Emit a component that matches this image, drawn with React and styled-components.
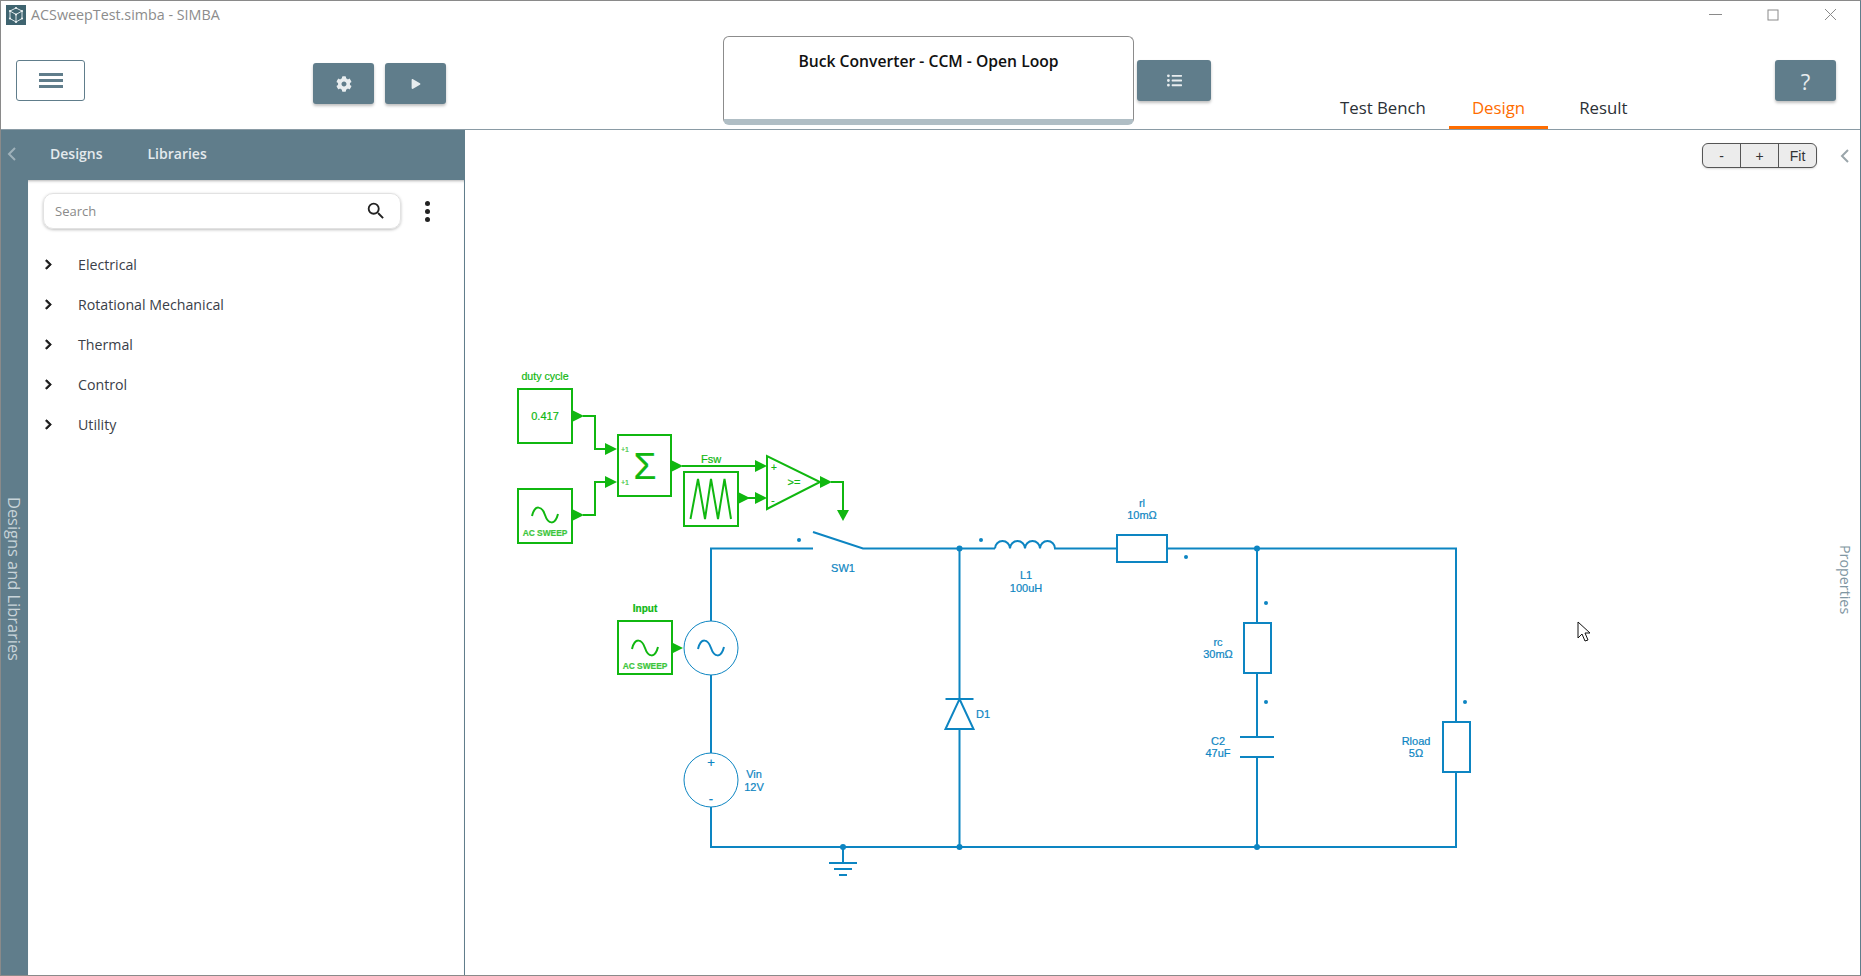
import React from "react";
import styled, { createGlobalStyle } from "styled-components";
import { FaCog, FaPlay, FaListUl, FaChevronRight } from "react-icons/fa";
import { MdSearch } from "react-icons/md";

const SLATE = "#607d8b";
const BLUE = "#0d85c2";
const GREEN = "#10b710";
const LIGHT_GREEN = "#3cc63c";

const GlobalStyle = createGlobalStyle`
  html, body {
    margin: 0;
    padding: 0;
    height: 100%;
    background: #fff;
    overflow: hidden;
  }
  #root {
    height: 100%;
  }
`;

const Window = styled.div`
  width: 1861px;
  height: 976px;
  box-sizing: border-box;
  border: 1px solid #8a8a8a;
  border-right-color: #607d8b;
  display: flex;
  flex-direction: column;
  font-family: "Open Sans", "Noto Sans", sans-serif;
  background: #fff;
  overflow: hidden;
`;

const TopArea = styled.div`
  height: 128px;
  flex: none;
  display: flex;
  flex-direction: column;
  border-bottom: 1px solid #8a9ba5;
`;

const TitleBar = styled.div`
  height: 27px;
  flex: none;
  display: flex;
  align-items: center;
  padding-left: 5px;
  gap: 5px;
`;

const AppTitle = styled.span`
  font-size: 14.3px;
  color: #8c8c8c;
  flex: 1;
`;

const WindowControls = styled.div`
  display: flex;
  align-items: center;
  gap: 45px;
  padding-right: 23px;
  color: #8a8a8a;
`;

const Toolbar = styled.div`
  flex: 1;
  display: flex;
  align-items: flex-start;
  position: relative;
`;

const MenuButton = styled.button`
  width: 69px;
  height: 41px;
  margin: 32px 0 0 15px;
  background: #fff;
  border: 1px solid ${SLATE};
  border-radius: 3px;
  display: flex;
  flex-direction: column;
  align-items: center;
  justify-content: center;
  gap: 3px;
  padding: 0;
  span {
    display: block;
    width: 24px;
    height: 3px;
    background: ${SLATE};
  }
`;

const SlateButton = styled.button`
  width: ${(p) => p.$w || 61}px;
  height: 41px;
  margin: ${(p) => p.$margin};
  flex: none;
  background: ${SLATE};
  border: none;
  border-radius: 3px;
  box-shadow: 0 2px 3px rgba(0, 0, 0, 0.25);
  color: #e8edef;
  display: flex;
  align-items: center;
  justify-content: center;
  padding: 0;
  font-family: inherit;
  font-size: 22px;
`;

const TitleBox = styled.div`
  width: 411px;
  height: 89px;
  margin: 8px 0 0 277px;
  flex: none;
  box-sizing: border-box;
  border: 1px solid #8c8c8c;
  border-bottom: 6px solid #b0bec5;
  border-radius: 6px;
  text-align: center;
  padding-top: 13px;
  font-size: 15.7px;
  font-weight: 600;
  color: #111;
`;

const Tabs = styled.div`
  display: flex;
  align-self: flex-end;
  margin-left: 106px;
`;

const Tab = styled.div`
  height: 35px;
  box-sizing: border-box;
  padding: 0 23px 0 ${(p) => p.$left || 23}px;
  font-size: 16.8px;
  line-height: 28px;
  color: ${(p) => (p.$active ? "#ff6d00" : "#2b3036")};
  font-weight: 500;
  border-bottom: 3px solid ${(p) => (p.$active ? "#ff6d00" : "transparent")};
`;

const Body = styled.div`
  flex: 1;
  display: flex;
  min-height: 0;
`;

const Sidebar = styled.aside`
  width: 464px;
  box-sizing: border-box;
  flex: none;
  display: flex;
  flex-direction: column;
  border-right: 1px solid #607d8b;
  background: ${SLATE};
`;

const SideHeader = styled.div`
  height: 50px;
  flex: none;
  box-sizing: border-box;
  padding: 0 0 3px 6px;
  display: flex;
  align-items: center;
  color: #e4eaed;
  font-size: 14px;
  font-weight: 600;
`;

const SideTab = styled.span`
  margin-left: ${(p) => p.$ml}px;
`;

const SideBody = styled.div`
  flex: 1;
  display: flex;
  min-height: 0;
`;

const Strip = styled.div`
  width: 27px;
  flex: none;
  display: flex;
  justify-content: center;
  padding-top: 317px;
  box-sizing: border-box;
`;

const VerticalLabel = styled.div`
  writing-mode: vertical-rl;
  font-size: ${(p) => p.$size || 16.4}px;
  color: ${(p) => p.$color || "#c8d4d9"};
  white-space: nowrap;
`;

const Library = styled.div`
  flex: 1;
  background: #fff;
  box-shadow: inset 0 3px 3px -2px rgba(0, 0, 0, 0.3);
  padding: 13px 0 0 15px;
`;

const SearchRow = styled.div`
  display: flex;
  align-items: center;
  gap: 24px;
  margin-bottom: 15px;
`;

const SearchBox = styled.div`
  width: 358px;
  height: 36px;
  box-sizing: border-box;
  border: 1px solid #e2e2e2;
  border-radius: 10px;
  box-shadow: 0 1px 3px rgba(0, 0, 0, 0.25);
  display: flex;
  align-items: center;
  justify-content: space-between;
  padding: 0 13px 0 11px;
  font-size: 13px;
  color: #8a8a8a;
`;

const Dots = styled.div`
  display: flex;
  flex-direction: column;
  gap: 3px;
  span {
    width: 5px;
    height: 5px;
    border-radius: 50%;
    background: #222;
  }
`;

const TreeRow = styled.div`
  height: 40px;
  display: flex;
  align-items: center;
  font-size: 14.2px;
  color: #3a4048;
  svg {
    margin: 0 24px 0 0;
    width: 11px;
    height: 11px;
    color: #1c1c1c;
    stroke: currentColor;
    stroke-width: 36;
  }
`;

const Canvas = styled.main`
  flex: 1;
  position: relative;
  min-width: 0;
`;

const CircuitSvg = styled.svg`
  display: block;
  width: 100%;
  height: 100%;
  font-family: "Liberation Sans", Arial, sans-serif;
`;

const ZoomGroup = styled.div`
  position: absolute;
  top: 13px;
  right: 43px;
  height: 25px;
  display: flex;
  box-sizing: border-box;
  border: 1px solid #555;
  border-radius: 6px;
  overflow: hidden;
  background: #ececec;
  box-shadow: 0 1px 2px rgba(0, 0, 0, 0.15);
`;

const ZoomButton = styled.div`
  width: ${(p) => p.$w}px;
  display: flex;
  align-items: center;
  justify-content: center;
  font-family: "Liberation Sans", Arial, sans-serif;
  font-size: 14px;
  color: #333;
  & + & {
    border-left: 1px solid #555;
  }
`;

const CollapseIcon = styled.svg`
  position: absolute;
  top: ${(p) => p.$top}px;
  left: ${(p) => p.$left}px;
`;

const PropertiesTab = styled.div`
  position: absolute;
  right: 5px;
  top: 415px;
`;

const MenuBars = () => (
  <MenuButton aria-label="menu">
    <span />
    <span />
    <span />
  </MenuButton>
);

const AppIcon = () => (
  <svg width="20" height="20" viewBox="0 0 20 20">
    <rect width="20" height="20" fill="#3f6470" />
    <path
      d="M10 3 L16 6 V13.5 L10 17 L4 13.5 V6 Z M4 6 L10 9.5 L16 6 M10 9.5 V17"
      fill="none"
      stroke="#dfe7ea"
      strokeWidth="1"
    />
    {[[10, 3], [16, 6], [16, 13.5], [10, 17], [4, 13.5], [4, 6], [10, 9.5]].map(([x, y]) => (
      <circle key={`${x}-${y}`} cx={x} cy={y} r="1.1" fill="#eef3f4" />
    ))}
  </svg>
);

const Chevron = ({ color, top, left }) => (
  <CollapseIcon $top={top} $left={left} width="10" height="14" viewBox="0 0 10 14">
    <path d="M8 1 L2 7 L8 13" fill="none" stroke={color} strokeWidth="2" />
  </CollapseIcon>
);

const Label = ({ x, y, children, color = BLUE, size = 11, weight, anchor = "middle" }) => (
  <text
    x={x}
    y={y}
    fill={color}
    stroke={color}
    strokeWidth="0.2"
    fontSize={size}
    fontWeight={weight}
    textAnchor={anchor}
    dominantBaseline="central"
  >
    {children}
  </text>
);

const Sine = ({ x, y, color }) => (
  <path
    d={`M${x - 13} ${y + 1} C${x - 10} ${y - 11} ${x - 3} ${y - 9} ${x} ${y} S${x + 10} ${y + 11} ${x + 13} ${y - 1}`}
    fill="none"
    stroke={color}
    strokeWidth="2"
  />
);

const Arrow = ({ x, y }) => (
  <polygon points={`${x},${y - 6} ${x + 12},${y} ${x},${y + 6}`} fill={GREEN} />
);

const ControlBlock = ({ x, y, w = 54, h = 54 }) => (
  <rect x={x} y={y} width={w} height={h} fill="#fff" stroke={GREEN} strokeWidth="2" />
);

const Wire = ({ d, color = BLUE, width = 2 }) => (
  <path d={d} fill="none" stroke={color} strokeWidth={width} />
);

const Dot = ({ x, y, r = 2 }) => <circle cx={x} cy={y} r={r} fill={BLUE} />;

const Resistor = ({ x, y, w, h }) => (
  <rect x={x} y={y} width={w} height={h} fill="#fff" stroke={BLUE} strokeWidth="2" />
);

const Circuit = () => (
  <CircuitSvg viewBox="465 130 1395 845" preserveAspectRatio="xMinYMin slice">
    {/* control side */}
    <Label x={545} y={376} color={GREEN} size={10.6}>duty cycle</Label>
    <ControlBlock x={518} y={389} />
    <Label x={545} y={416} color={GREEN} size={11}>0.417</Label>
    <Wire d="M583 416 H595 V449 H605" color={GREEN} />
    <Arrow x={572} y={416} />
    <Arrow x={605} y={449} />

    <ControlBlock x={518} y={489} />
    <Sine x={545} y={515} color={GREEN} />
    <Label x={545} y={533} color={LIGHT_GREEN} size={8.4} weight="bold">AC SWEEP</Label>
    <Wire d="M583 515 H595 V482 H605" color={GREEN} />
    <Arrow x={572} y={515} />
    <Arrow x={605} y={482} />

    <ControlBlock x={618} y={435} w={53} h={61} />
    <Label x={621} y={449} color={LIGHT_GREEN} size={7} anchor="start">+1</Label>
    <Label x={621} y={482} color={LIGHT_GREEN} size={7} anchor="start">+1</Label>
    <Label x={645} y={466} color={GREEN} size={37}>Σ</Label>
    <Arrow x={671} y={466} />
    <Wire d="M682 466 H755" color={GREEN} />
    <Arrow x={755} y={466} />
    <Label x={711} y={459} color={GREEN} size={11}>Fsw</Label>

    <ControlBlock x={684} y={472} />
    <Wire d="M690.5 519 L698 479 L705 519 L711 479 L718 519 L724.5 479 L731 519" color={GREEN} />
    <Arrow x={738} y={498} />
    <Wire d="M748 498 H755" color={GREEN} />
    <Arrow x={755} y={498} />

    <polygon points="767,456 767,509 820,482" fill="#fff" stroke={GREEN} strokeWidth="2" />
    <Label x={774} y={467} color={GREEN} size={10}>+</Label>
    <Label x={773} y={500} color={GREEN} size={10}>-</Label>
    <Label x={794} y={482} color={GREEN} size={11}>&gt;=</Label>
    <Arrow x={820} y={482} />
    <Wire d="M831 482 H843 V510" color={GREEN} />
    <polygon points="837,510 849,510 843,521" fill={GREEN} />

    {/* power side */}
    <Wire d="M711 621 V548.5 H813" />
    <Wire d="M813 532 L863 548.5 H995" />
    <Dot x={799} y={540} />
    <Label x={843} y={568}>SW1</Label>

    <Label x={645} y={608} color={GREEN} size={10} weight="bold">Input</Label>
    <ControlBlock x={618} y={621} h={53} />
    <Sine x={645} y={648} color={GREEN} />
    <Label x={645} y={666} color={LIGHT_GREEN} size={8.4} weight="bold">AC SWEEP</Label>
    <Arrow x={671} y={648} />
    <circle cx={711} cy={648} r={27} fill="#fff" stroke={BLUE} strokeWidth="1" />
    <Sine x={711} y={648} color={BLUE} />
    <Wire d="M711 675 V753" />
    <circle cx={711} cy={780} r={27} fill="#fff" stroke={BLUE} strokeWidth="1" />
    <Label x={711} y={762} size={13}>+</Label>
    <Label x={711} y={798} size={13}>-</Label>
    <Label x={754} y={774}>Vin</Label>
    <Label x={754} y={787}>12V</Label>
    <Wire d="M711 807 V847 H1456 V772" />

    <Wire d="M843 847 V863" />
    <Wire d="M829 863 H857 M834 869 H852 M839 875 H847" />
    <Dot x={843} y={847} r={3} />

    <Wire d="M959.5 548 V699 M959.5 729 V847" />
    <Wire d="M945.5 699 H973.5" />
    <polygon points="959.5,699 973.5,729 945.5,729" fill="#fff" stroke={BLUE} strokeWidth="2" />
    <Label x={983} y={714}>D1</Label>
    <Dot x={959.5} y={548.5} r={3} />
    <Dot x={959.5} y={847} r={3} />
    <Dot x={981} y={540} />

    <Wire d="M995 548.5 a7.5 7.5 0 0 1 15 0 a7.5 7.5 0 0 1 15 0 a7.5 7.5 0 0 1 15 0 a7.5 7.5 0 0 1 15 0 H1117" />
    <Label x={1026} y={575}>L1</Label>
    <Label x={1026} y={588}>100uH</Label>
    <Resistor x={1117} y={535} w={50} h={27} />
    <Label x={1142} y={503}>rl</Label>
    <Label x={1142} y={515}>10mΩ</Label>
    <Wire d="M1167 548.5 H1456 V722" />
    <Dot x={1186} y={557} />

    <Dot x={1257} y={548.5} r={3} />
    <Dot x={1257} y={847} r={3} />
    <Wire d="M1257 548 V623 M1257 673 V737 M1257 757 V847" />
    <Resistor x={1244} y={623} w={27} h={50} />
    <Dot x={1266} y={603} />
    <Dot x={1266} y={702} />
    <Label x={1218} y={642}>rc</Label>
    <Label x={1218} y={654}>30mΩ</Label>
    <Wire d="M1240 737 H1274 M1240 757 H1274" />
    <Label x={1218} y={741}>C2</Label>
    <Label x={1218} y={753}>47uF</Label>

    <Resistor x={1443} y={722} w={27} h={50} />
    <Dot x={1465} y={702} />
    <Label x={1416} y={741}>Rload</Label>
    <Label x={1416} y={753}>5Ω</Label>

    {/* mouse pointer */}
    <path
      d="M1578 622 V638 L1582 634 L1585 641 L1588 640 L1585 633 L1590 633 Z"
      fill="#fff"
      stroke="#111"
      strokeWidth="1"
    />
  </CircuitSvg>
);

export default function App() {
  return (
    <Window>
      <GlobalStyle />
      <TopArea>
        <TitleBar>
          <AppIcon />
          <AppTitle>ACSweepTest.simba - SIMBA</AppTitle>
          <WindowControls>
            <svg width="13" height="13" viewBox="0 0 13 13">
              <path d="M0 6.5 H13" stroke="currentColor" />
            </svg>
            <svg width="12" height="12" viewBox="0 0 12 12">
              <rect x="1" y="1" width="10" height="10" fill="none" stroke="currentColor" />
            </svg>
            <svg width="13" height="13" viewBox="0 0 13 13">
              <path d="M1 1 L12 12 M12 1 L1 12" stroke="currentColor" />
            </svg>
          </WindowControls>
        </TitleBar>
        <Toolbar>
          <MenuBars />
          <SlateButton $margin="35px 0 0 228px">
            <FaCog size={16} />
          </SlateButton>
          <SlateButton $margin="35px 0 0 11px">
            <FaPlay size={10} />
          </SlateButton>
          <TitleBox>Buck Converter - CCM - Open Loop</TitleBox>
          <SlateButton $w={74} $margin="32px 0 0 3px">
            <FaListUl size={15} />
          </SlateButton>
          <Tabs>
            <Tab>Test Bench</Tab>
            <Tab $active>Design</Tab>
            <Tab $left={31}>Result</Tab>
          </Tabs>
          <SlateButton $margin="32px 24px 0 auto">?</SlateButton>
        </Toolbar>
      </TopArea>
      <Body>
        <Sidebar>
          <SideHeader>
            <svg width="10" height="14" viewBox="0 0 10 14">
              <path d="M8 1 L2 7 L8 13" fill="none" stroke="#9fb1ba" strokeWidth="2" />
            </svg>
            <SideTab $ml={33}>Designs</SideTab>
            <SideTab $ml={45}>Libraries</SideTab>
          </SideHeader>
          <SideBody>
            <Strip>
              <VerticalLabel>Designs and Libraries</VerticalLabel>
            </Strip>
            <Library>
              <SearchRow>
                <SearchBox>
                  Search
                  <MdSearch size={22} color="#222" />
                </SearchBox>
                <Dots>
                  <span />
                  <span />
                  <span />
                </Dots>
              </SearchRow>
              {["Electrical", "Rotational Mechanical", "Thermal", "Control", "Utility"].map((name) => (
                <TreeRow key={name}>
                  <FaChevronRight />
                  {name}
                </TreeRow>
              ))}
            </Library>
          </SideBody>
        </Sidebar>
        <Canvas>
          <Circuit />
          <ZoomGroup>
            <ZoomButton $w={37}>-</ZoomButton>
            <ZoomButton $w={37}>+</ZoomButton>
            <ZoomButton $w={37}>Fit</ZoomButton>
          </ZoomGroup>
          <Chevron color="#9aa5aa" top={19} left={1375} />
          <PropertiesTab>
            <VerticalLabel $size={14.3} $color="#7f96a2">Properties</VerticalLabel>
          </PropertiesTab>
        </Canvas>
      </Body>
    </Window>
  );
}
